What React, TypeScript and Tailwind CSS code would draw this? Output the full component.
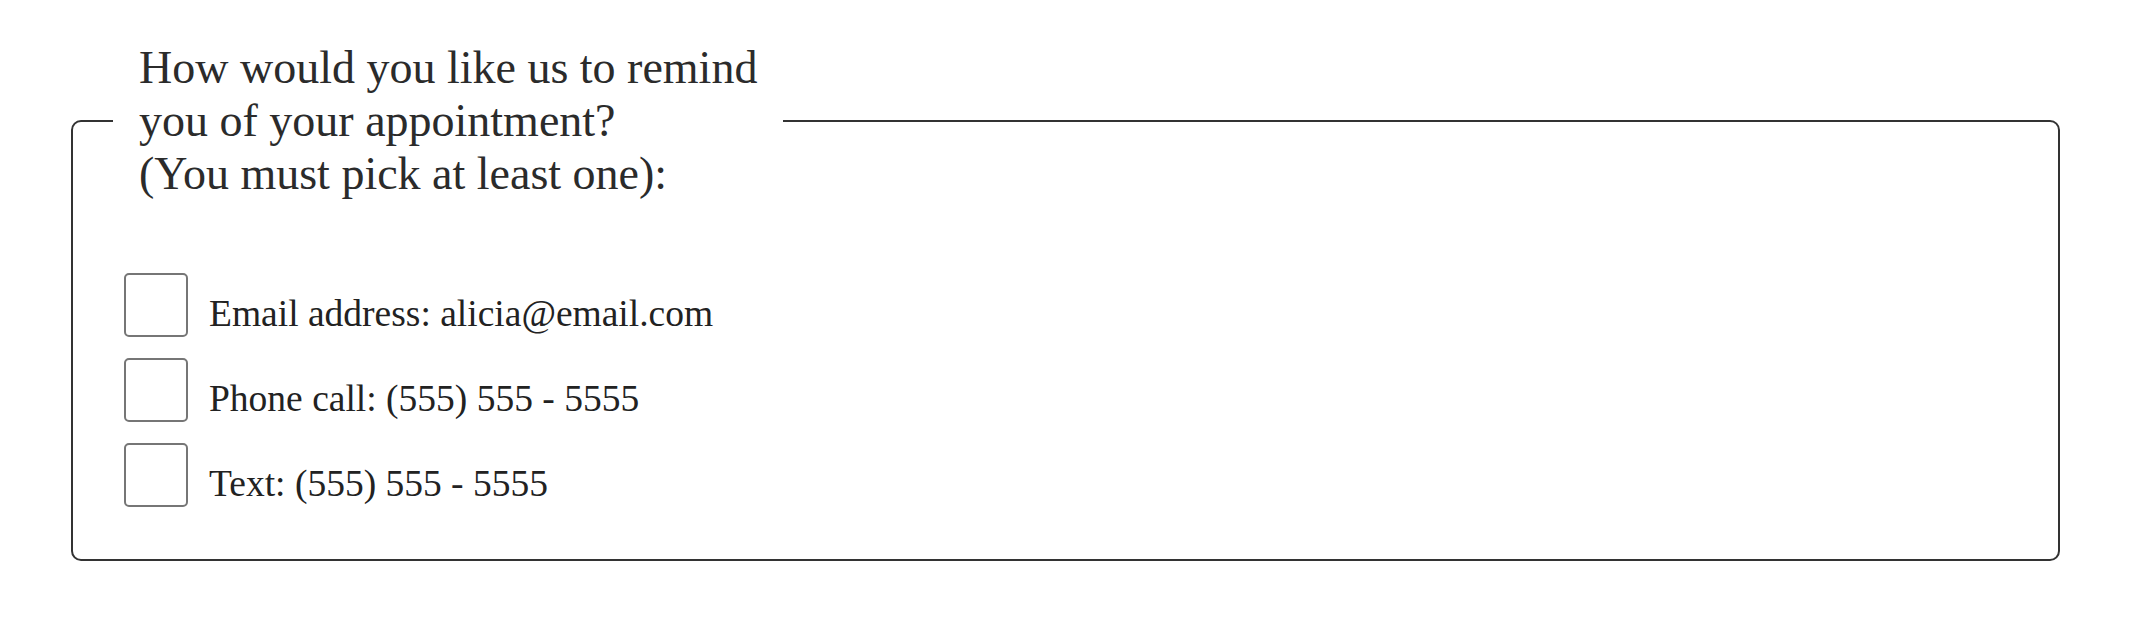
import React from "react";

const options = [
  { id: "email", label: "Email address: alicia@email.com" },
  { id: "phone", label: "Phone call: (555) 555 - 5555" },
  { id: "text", label: "Text: (555) 555 - 5555" },
];

export default function App() {
  return (
    <div className="min-h-screen bg-white pt-[41px] pl-[71px] pr-[78px] font-['Liberation_Serif',serif] text-[#2b2b2b]">
      <fieldset className="border-2 border-[#333] rounded-[10px] px-[40px] pb-[44px]">
        <legend className="px-[26px] text-[46px] leading-[53px]">
          How would you like us to remind
          <br />
          you of your appointment?
          <br />
          (You must pick at least one):
        </legend>

        <div className="mt-[73px] pl-[11px] flex flex-col gap-[13px]">
          {options.map((opt) => (
            <label key={opt.id} htmlFor={opt.id} className="flex items-start gap-[21px] cursor-pointer">
              <input
                id={opt.id}
                type="checkbox"
                className="appearance-none w-[64px] h-[64px] shrink-0 border-2 border-[#767676] rounded-[5px] bg-white"
              />
              <span className="mt-[10px] text-[37.5px] leading-[62px] text-[#222]">{opt.label}</span>
            </label>
          ))}
        </div>
      </fieldset>
    </div>
  );
}
